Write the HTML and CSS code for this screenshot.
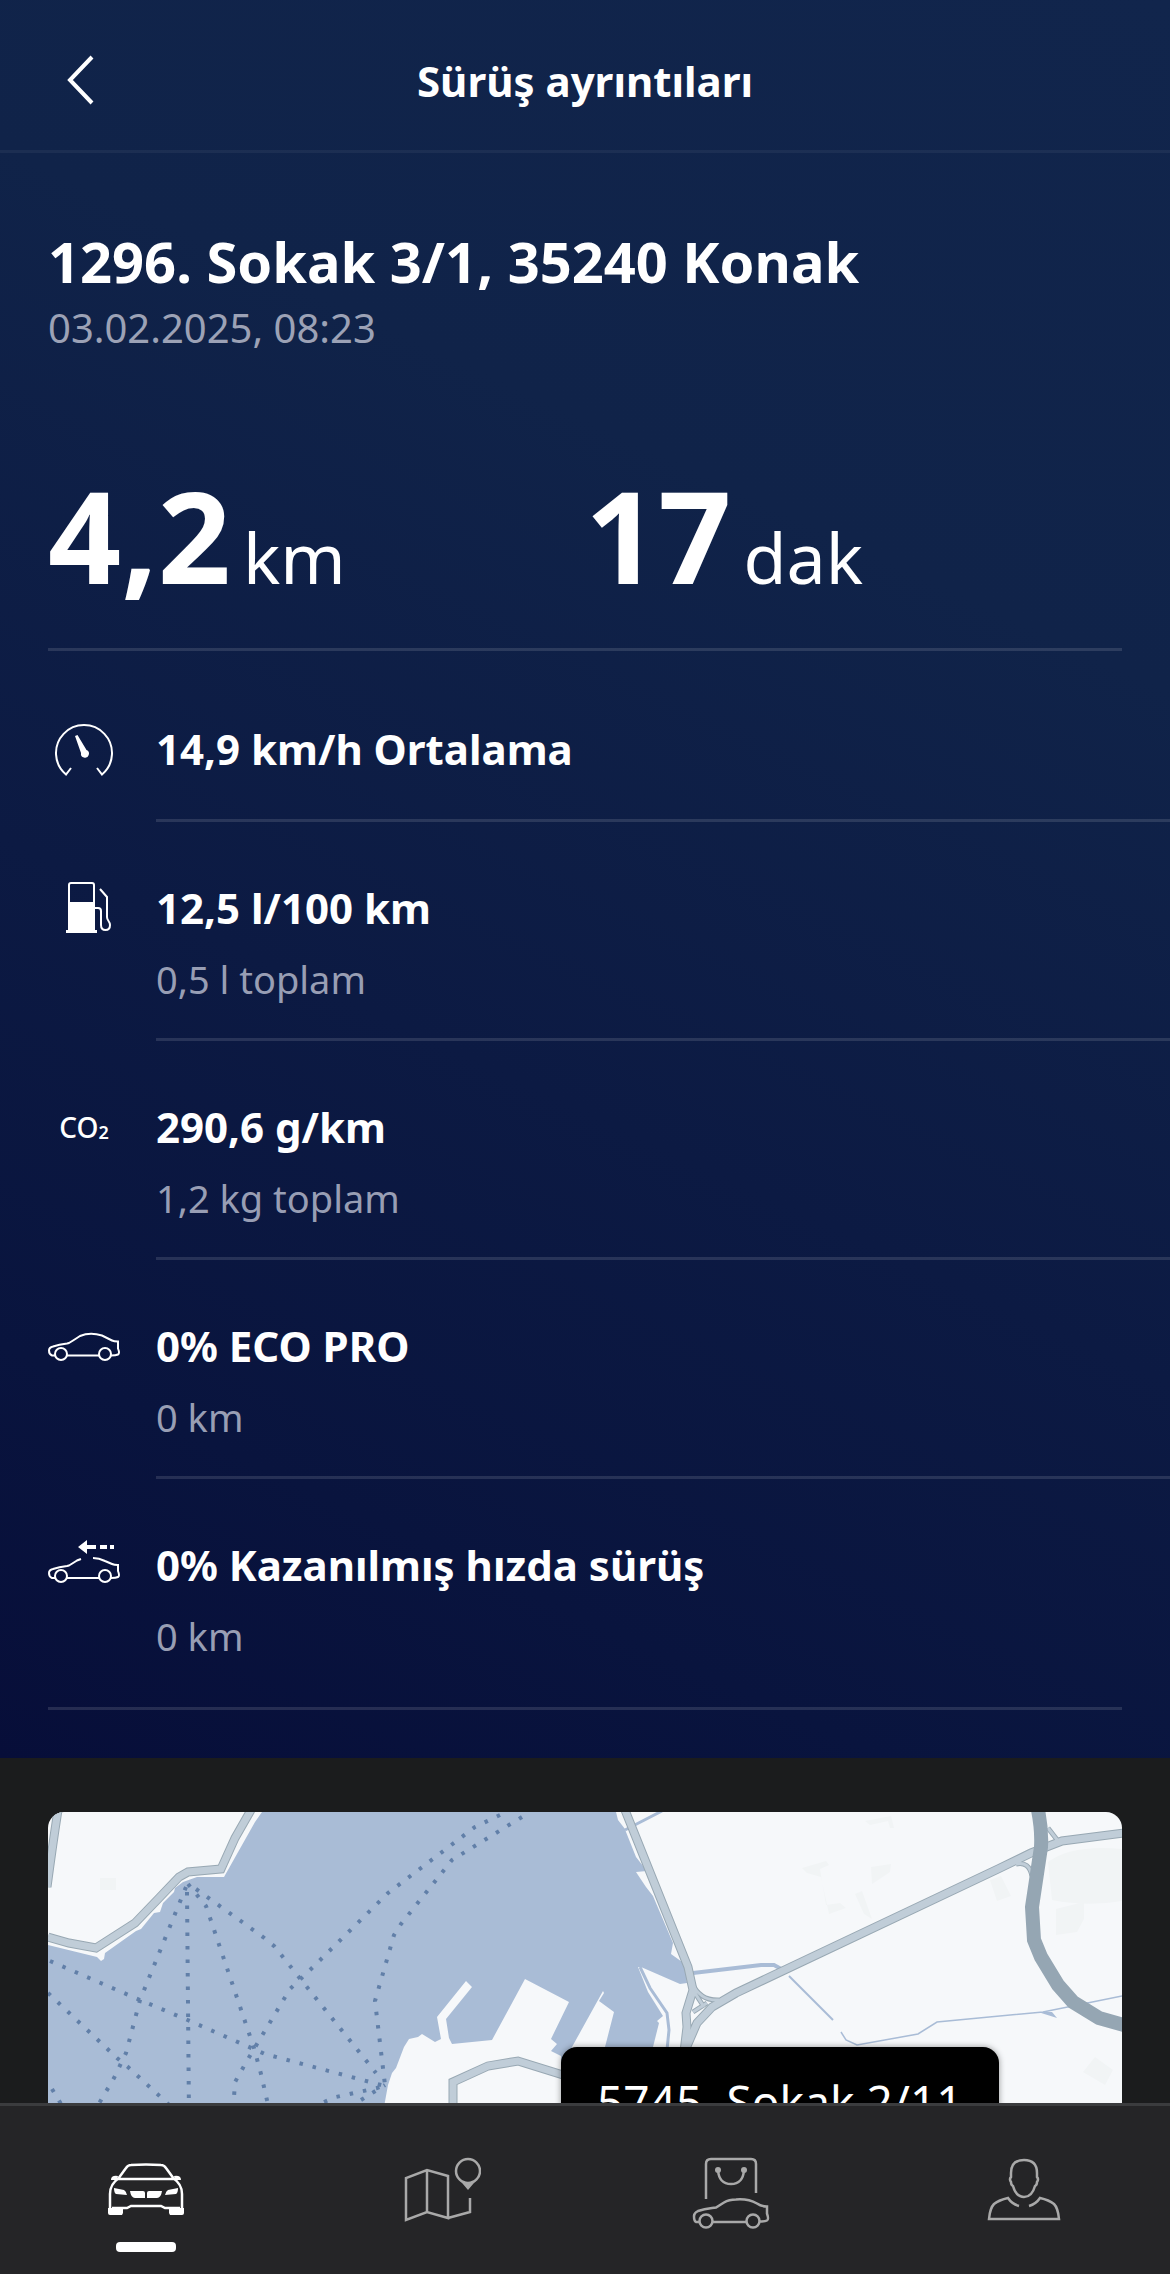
FILE: index.html
```html
<!DOCTYPE html>
<html lang="tr">
<head>
    <meta charset="UTF-8">
    <meta name="viewport" content="width=device-width, initial-scale=1.0">
    <title>Sürüş ayrıntıları</title>
    <link rel="stylesheet" href="styles.css">
</head>
<body>
    <main class="screen">
        <div class="hero">
            <header class="topbar">
                <button type="button" class="back" aria-label="Geri">
                    <svg width="28" height="50" viewBox="0 0 28 50" fill="none" stroke="#fff" stroke-width="4"><path d="M26 2 4 25l22 23"/></svg>
                </button>
                <h1>Sürüş ayrıntıları</h1>
            </header>

            <section class="trip">
                <h2>1296. Sokak 3/1, 35240 Konak</h2>
                <p class="date">03.02.2025, 08:23</p>
                <div class="totals">
                    <p><strong>4,2</strong><span>km</span></p>
                    <p><strong>17</strong><span>dak</span></p>
                </div>
            </section>

            <ul class="stats">
                <li>
                    <svg class="icon" viewBox="0 0 72 72" fill="none" stroke="#fff" stroke-width="2">
                        <path d="M23 55l-5 6.500A28 28 0 1 1 54 61.500L49 55"/>
                        <path d="M27 23l2.500-1L38.500 37a4 4 0 1 1-5.500 3z" fill="#fff" stroke="none"/>
                    </svg>
                    <div class="text">
                        <h3>14,9 km/h Ortalama</h3>
                    </div>
                </li>
                <li>
                    <svg class="icon" viewBox="0 0 72 72" fill="none" stroke="#fff" stroke-width="2">
                        <path d="M21 58V13q0-2 2-2h21q2 0 2 2v45"/>
                        <path d="M20 30h27v28h2v3H18v-3h2z" fill="#fff" stroke="none"/>
                        <path d="M47 36h3q3 0 3 3v14q0 5 4.500 5t4.500-5q0-2-1.500-4T59 45V25l-7-8"/>
                    </svg>
                    <div class="text">
                        <h3>12,5 l/100 km</h3>
                        <p>0,5 l toplam</p>
                    </div>
                </li>
                <li>
                    <span class="icon co2">CO<sub>2</sub></span>
                    <div class="text">
                        <h3>290,6 g/km</h3>
                        <p>1,2 kg toplam</p>
                    </div>
                </li>
                <li>
                    <svg class="icon" viewBox="0 0 72 72" fill="none" stroke="#fff" stroke-width="2">
                        <path d="M7 45.500H4q-3-1-3-5 0-3 4-4 6-2 14-3l2-.5q5-3 11-7 10-4 22-.5l10 5q2 1 6 1v7q2 5 0 6-2 1-7 1M19 45.500h32"/>
                        <circle cx="13" cy="44" r="6"/><circle cx="57" cy="44" r="6"/>
                    </svg>
                    <div class="text">
                        <h3>0% ECO PRO</h3>
                        <p>0 km</p>
                    </div>
                </li>
                <li>
                    <svg class="icon" viewBox="0 0 72 72" fill="none" stroke="#fff" stroke-width="2">
                        <path d="M7 49H4q-3-1-3-5 0-3 4-4 6-2 14-3l2-.5q5-3 8-5l4-1.500M45 29q6 0 12 3l7 3q2 1 6 1v6q2 5 0 6-2 1-7 1M19 49h32"/>
                        <circle cx="13" cy="47" r="6"/><circle cx="57" cy="47" r="6"/>
                        <path d="M30 18l9-7v5h9v4h-9v5zM52 16h7v4h-7zM62 16h4v4h-4z" fill="#fff" stroke="none"/>
                    </svg>
                    <div class="text">
                        <h3>0% Kazanılmış hızda sürüş</h3>
                        <p>0 km</p>
                    </div>
                </li>
            </ul>
        </div>

        <section class="map-section">
            <div class="map">
                <svg class="map-art" viewBox="0 0 1074 306" preserveAspectRatio="xMinYMin slice">
                    <rect width="1074" height="306" fill="#f6f8fa"/>
                    <!-- blocks -->
                    <g fill="#f1f4f5">
                        <path d="M817 9l26-5 3 12h-4l-2-7-18 4zM754 56l24-7 3 4-9 4 6 36 14-2 6 5-17 6-8-37-14-4zM823 55l20-3-1 8-18 12zM807 82l7-3 10 28-8-5zM942 68l11-4 10 20-14 5zM1008 97l28-7v17l-7 13-21 3zM52 66h16v12H52z"/>
                        <path d="M1000 50q24-18 74-13v52q-35 6-70-1z"/>
                        <path d="M1047 245l18 13-8 15-22-13z"/>
                    </g>
                    <!-- bay -->
                    <path fill="#a9bcd6" d="M214 0l-7 10-31 55h-27l-14 5-8 6-1 4-11 11-3 9-6 1-13 16-5 2-31 22-1 6-3 2-4-4-49-12v173h334l6-33 4-12 4-5 8-21 5-8 9-2 4-3 13 8 6-3-4-22 29-36 6 6-26 32 3 19 3 6 40-4 33-61 44 23-18 37 6 5-6 7 10 5v20h7l4-29 31-56 1 2-5 8 15 11-9 35v20h46l2-20 6-24-2-2 6-5-15-24-10-25 3 0 39 17 7-1-2-19-14-10 2-11-20-47-7-9-10-15 11-1-11-14-10-25-1-3-7-9-2-8z"/>
                    <g fill="none" stroke="#a9bcd6">
                        <path stroke-width="3" d="M614-1 577 18M592 155l10 21 17 25 2 17-2 20"/>
                        <path stroke-width="4" d="M645 161l68-8h13l9 5"/>
                        <path stroke-width="2" d="M741 164l44 44"/>
                        <path stroke-width="1.500" d="M793 220l5 8 11 5 61-11 19-12 106-10 79-16"/>
                        <path fill="#a9bcd6" stroke="none" d="M990 200l14 0 5 6z"/>
                    </g>
                    <!-- ferry lines -->
                    <g fill="none" stroke="#617fa8" stroke-width="4" stroke-dasharray="3.500 10">
                        <path d="M139 80l2 226M138 75 92 188 78 241l-12 25-20 34M140 72l18 22 48 142 7 26 8 35M148 77l67 48 11 9 94 117 8 10"/>
                        <path d="M452 3l-25 12-87 66-78 77-20 19-42 70-13 23-2 30"/>
                        <path d="M474 5l-70 43-51 64-7 11-19 66 10 84"/>
                        <path d="M2 149l90 39 50 21 75 33 105 28 15 4M0 181l69 65 11 9 50 46M4 277l12 20M276 290l12-5 41-9 8-3M313 288l24-15"/>
                    </g>
                    <!-- roads: casing first, then fill -->
                    <g fill="none" stroke="#98a8b3" stroke-width="9">
                        <path d="M203-2l-16 28-14 31-33 3-9 5-19 20-25 26-39 25-27-5-21-6M10-2Q5 30-1 75M405 306v-36l35-16 30-5 45 14"/>
                        <path d="M577-2l63 157 5 23-7 23 1 14-3 25M1076 21l-62 8-31 12-33 16-262 124-24 14-15 16-13 30"/>
                        <path stroke-width="5" d="M644 171q8 18 27 17M645 178l11 17M1000 16l10 13M968 52q13-3 16 12M645 200l14-9"/>
                    </g>
                    <g fill="none" stroke="#c0cdd8" stroke-width="7">
                        <path d="M203-2l-16 28-14 31-33 3-9 5-19 20-25 26-39 25-27-5-21-6M10-2Q5 30-1 75M405 306v-36l35-16 30-5 45 14"/>
                        <path d="M577-2l63 157 5 23-7 23 1 14-3 25M1076 21l-62 8-31 12-33 16-262 124-24 14-15 16-13 30"/>
                        <path stroke-width="3" d="M644 171q8 18 27 17M645 178l11 17M1000 16l10 13M968 52q13-3 16 12M645 200l14-9"/>
                    </g>
                    <path fill="none" stroke="#95a6b3" stroke-width="14" d="M990-2q4 20 3 37l-9 60 2 33 7 17 17 28 15 17 26 16 25 7"/>
                </svg>
                <div class="pin-label">5745. Sokak 2/11</div>
            </div>
        </section>
    </main>

    <nav class="tabs">
        <a href="#" class="active" aria-label="Araç">
            <svg viewBox="0 0 84 84" fill="none" stroke="#fff" stroke-width="2.500">
                <path d="M14 31l8-11q2-3 5-3 15-1 30 0 3 0 5 3l8 11M13 31h58M15 30q-9 6-9 16v15M69 30q9 6 9 16v15M8 60h15l4-2h30l4 2h15"/>
                <g fill="#fff" stroke="none">
                    <path d="M4 60h15v5l-1 2H6q-2 0-2-2zM80 60H65v5l1 2h12q2 0 2-2zM14 28q-7-1-7 4h6zM70 28q7-1 7 4h-6z"/>
                    <path d="M10 40l10 2q2 1 3 5l-11-1q-2-1-2-6zM74 40l-10 2q-2 1-3 5l11-1q2-1 2-6zM26 43h13q2 0 2 2v5l-10 0q-4 0-5-7zM58 43H45q-2 0-2 2v5l10 0q4 0 5-7z"/>
                </g>
            </svg>
        </a>
        <a href="#" aria-label="Harita">
            <svg viewBox="0 0 84 84" fill="none" stroke="#a9a9a9" stroke-width="2.500">
                <path d="M9 72V30l21-8 21 6v42l-21-6zM30 22v42M51 70l22-6V50"/>
                <circle cx="71" cy="23" r="12"/>
                <path d="M60 29l11 13 11-13q-11 11-22 0z" fill="#a9a9a9" stroke="none"/>
            </svg>
        </a>
        <a href="#" aria-label="Mağaza">
            <svg viewBox="0 0 84 84" fill="none" stroke="#a9a9a9" stroke-width="2.500">
                <path d="M17 51V16q0-5 5-5h40q5 0 5 5v29M29 22q1 14 13 14t13-14"/>
                <circle cx="29" cy="22" r="3" fill="#a9a9a9" stroke="none"/><circle cx="55" cy="22" r="3" fill="#a9a9a9" stroke="none"/>
                <path d="M10 74H7q-2-1-2-6 0-3 4-5 6-2 14-3l4-.5 8-5q5-3 12-3 12-1 21 4 4 3 10 3v7q2 6 0 7-2 1-8 1M24 74h34"/>
                <circle cx="17" cy="73" r="6.500"/><circle cx="64" cy="73" r="6.500"/>
            </svg>
        </a>
        <a href="#" aria-label="Profil">
            <svg viewBox="0 0 84 84" fill="none" stroke="#a9a9a9" stroke-width="2.500">
                <path d="M42 12q-13 0-13 13v4q-2 2 0 5 0 3 2 4 3 11 11 11t11-11q2-1 2-4 2-3 0-5v-4q0-13-13-13z"/>
                <path d="M37 58q-7-2-11-8-9 2-14 6-4 4-5 15h70q-1-11-5-15-5-4-14-6-4 6-11 8"/>
            </svg>
        </a>
    </nav>
</body>
</html>
```

FILE: styles.css
```css
* {
    box-sizing: border-box;
    margin: 0;
    padding: 0;
}
body {
    display: flex;
    flex-direction: column;
    height: 100vh;
    background-color: #1b1c1d;
    color: #fff;
    font-family: "Noto Sans", sans-serif;
}
.screen {
    flex: 1;
    min-height: 0;
    overflow: hidden;
}
.hero {
    padding-bottom: 48px;
    background: linear-gradient(205deg, #11254c 0%, #102349 30%, #0c1a43 60%, #09143e 82%, #070e39 100%);
}

/* header */
.topbar {
    display: grid;
    grid-template-columns: 100px 1fr 100px;
    align-items: center;
    padding: 10px 0 0;
    height: 153px;
    border-bottom: 3px solid rgba(255, 255, 255, 0.05);
}
.back {
    display: flex;
    justify-content: flex-end;
    padding: 10px 6px;
    background: none;
    border: none;
    cursor: pointer;
}
.topbar h1 {
    font-size: 42px;
    font-weight: 700;
    text-align: center;
}

/* trip summary */
.trip {
    margin: 0 48px;
    padding: 70px 0 16px;
    border-bottom: 3px solid rgba(255, 255, 255, 0.12);
}
.trip h2 {
    font-size: 56px;
    font-weight: 700;
    line-height: 76px;
}
.date {
    color: #9ca2b6;
    font-size: 40px;
    line-height: 58px;
}
.totals {
    display: grid;
    grid-template-columns: 1fr 1fr;
    padding-top: 103px;
}
.totals p {
    display: flex;
    align-items: baseline;
    gap: 12px;
    line-height: 150px;
}
.totals strong {
    font-size: 128px;
    font-weight: 700;
}
.totals span {
    font-size: 70px;
    font-weight: 400;
}

/* stats list */
.stats {
    position: relative;
    padding: 12px 0;
    list-style: none;
}
.stats::after {
    content: "";
    position: absolute;
    left: 48px;
    right: 48px;
    bottom: 0;
    height: 3px;
    background-color: rgba(255, 255, 255, 0.12);
}
.stats li {
    display: flex;
    gap: 36px;
    padding-left: 48px;
}
.icon {
    flex: none;
    width: 72px;
    height: 72px;
    margin-top: 50px;
}
.co2 {
    display: flex;
    align-items: center;
    justify-content: center;
    font-size: 28px;
    font-weight: 500;
}
.co2 sub {
    font-size: 18px;
    font-weight: 600;
    vertical-align: baseline;
    padding-top: 10px;
}
.text {
    flex: 1;
    padding: 50px 0 40px;
    border-bottom: 3px solid rgba(255, 255, 255, 0.12);
}
.stats li:first-child .text {
    padding-bottom: 34px;
}
.stats li:last-child .text {
    border-bottom-color: transparent;
}
.text h3 {
    font-size: 42px;
    font-weight: 700;
    line-height: 72px;
}
.text p {
    margin-top: 16px;
    color: #989eb4;
    font-size: 38px;
    line-height: 38px;
}

/* map */
.map-section {
    padding: 54px 48px;
}
.map {
    position: relative;
    height: 306px;
    border-radius: 16px;
    overflow: hidden;
}
.map-art {
    display: block;
    width: 100%;
    height: 100%;
}
.pin-label {
    position: absolute;
    top: 235px;
    left: 513px;
    padding: 20px 36px;
    border-radius: 16px;
    background-color: #000;
    box-shadow: 0 0 6px rgba(0, 0, 0, 0.4);
    font-size: 46px;
    line-height: 68px;
}

/* bottom tabs */
.tabs {
    display: flex;
    height: 171px;
    padding-top: 42px;
    background-color: #252527;
    border-top: 3px solid #3b3c3e;
}
.tabs a {
    display: flex;
    flex: 1;
    flex-direction: column;
    align-items: center;
    gap: 10px;
}
.tabs svg {
    width: 84px;
    height: 84px;
}
.tabs .active::after {
    content: "";
    width: 60px;
    height: 10px;
    border-radius: 4px;
    background-color: #fff;
}
```
